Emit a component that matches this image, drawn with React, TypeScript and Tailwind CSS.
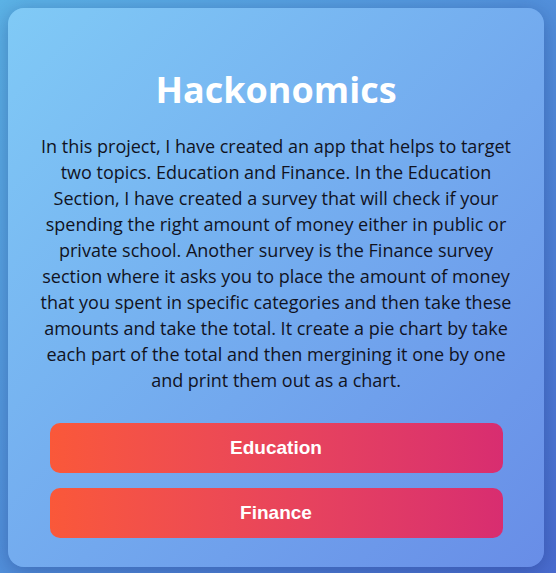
import React from 'react';

const description =
  "In this project, I have created an app that helps to target two topics. Education and Finance. In the Education Section, I have created a survey that will check if your spending the right amount of money either in public or private school. Another survey is the Finance survey section where it asks you to place the amount of money that you spent in specific categories and then take these amounts and take the total. It create a pie chart by take each part of the total and then mergining it one by one and print them out as a chart.";

const App: React.FC = () => {
  return (
    <div className="min-h-screen bg-gradient-to-br from-[#5cb3e6] to-[#4a6ccf] p-2 font-['Open_Sans',sans-serif]">
      {/* Card */}
      <div className="w-[536px] rounded-2xl bg-gradient-to-br from-[#80caf6] to-[#688de7] shadow-[0_4px_20px_rgba(20,40,110,0.35)] px-8 pt-[60px] pb-[29px]">
        <h1 className="text-center text-[36px] leading-[43px] font-bold text-white">
          Hackonomics
        </h1>
        <p className="mt-[22px] text-center text-[18px] leading-[26px] text-[#11131f]">
          {description}
        </p>

        <div className="mt-[30px] flex flex-col items-center gap-[15px]">
          <button className="w-[453px] h-[50px] rounded-[10px] bg-gradient-to-r from-[#fa5839] to-[#d82d70] text-white text-[19px] font-bold font-['Liberation_Sans',Arial,sans-serif]">
            Education
          </button>
          <button className="w-[453px] h-[50px] rounded-[10px] bg-gradient-to-r from-[#fa5839] to-[#d82d70] text-white text-[19px] font-bold font-['Liberation_Sans',Arial,sans-serif]">
            Finance
          </button>
        </div>
      </div>
    </div>
  );
};

export default App;
